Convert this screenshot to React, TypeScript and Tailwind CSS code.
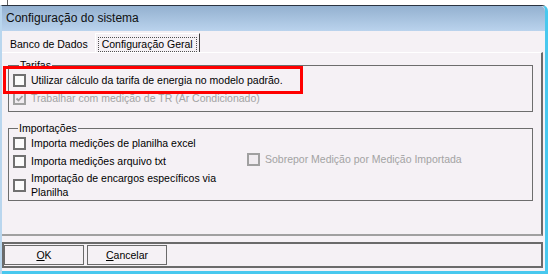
const Box = ({ checked, disabled }: { checked?: boolean; disabled?: boolean }) => (
  <span
    className={`relative inline-block w-[13px] h-[13px] shrink-0 border-2 ${
      disabled ? "border-[#a0a0a0] bg-[#f0ecf0]" : "border-[#707070] bg-[#fbfbfb]"
    }`}
  >
    {checked && (
      <svg viewBox="0 0 9 9" className="absolute left-0 top-0 w-[9px] h-[9px]">
        <path d="M1.5 4.5 L3.5 6.5 L7.5 2" stroke="#a0a0a0" strokeWidth="1.8" fill="none" />
      </svg>
    )}
  </span>
);

const Check = ({
  label,
  checked,
  disabled,
}: {
  label: React.ReactNode;
  checked?: boolean;
  disabled?: boolean;
}) => (
  <div className="flex items-center gap-[5px] h-[18px]">
    <Box checked={checked} disabled={disabled} />
    <span className={disabled ? "text-[#a3a3a3]" : "text-black"}>{label}</span>
  </div>
);

export default function App() {
  return (
    <div
      className="w-[548px] h-[276px] bg-white overflow-hidden text-[10.5px] leading-[13px] relative"
      style={{ fontFamily: '"Liberation Sans", Arial, sans-serif' }}
    >
      {/* window behind */}
      <div className="h-[5px] ml-[7px] border-l border-[#606060] bg-white" />
      <div className="w-[548px] h-[269px] border-t border-[#2b3440] border-r-[3px] border-r-[#48c8ee] border-l-2 border-l-[#b9d6ee] rounded-tr-[6px] bg-[#f5f1f5] flex flex-col">
        {/* title bar */}
        <div className="h-[25px] bg-gradient-to-b from-[#94b1d0] to-[#bad3ed] flex items-center pl-[4px] rounded-tr-[5px]">
          <span className="text-[12px] text-[#101010]">Configuração do sistema</span>
        </div>
        {/* tabs */}
        <div className="h-[21px] flex items-end pl-[6px]">
          <div className="h-[14px] px-[2px] flex items-start">Banco de Dados</div>
          <div className="ml-[5px] h-[19px] px-[2px] pt-[2px] border-l border-white border-r border-r-[#404040] border-t border-t-white flex items-center">
            <span className="border border-dotted border-[#505050] px-[3px] leading-[13px]">Configuração Geral</span>
          </div>
        </div>
        {/* panel */}
        <div className="h-[184px] w-[541px] border-t border-white border-r-2 border-r-[#6a6a6a] border-b-2 border-b-[#a0a0a0] pl-[6px] pr-[8px] pt-[7px]">
          <fieldset className="border border-[#6d6d6d] px-[4px] pb-[4px]">
            <legend className="ml-[6px] px-[1px] leading-[11px]">Tarifas</legend>
            <Check label="Utilizar cálculo da tarifa de energia no modelo padrão." />
            <Check label="Trabalhar com medição de TR (Ar Condicionado)" checked disabled />
          </fieldset>
          <fieldset className="mt-[11px] border border-[#6d6d6d] px-[4px] pb-0">
            <legend className="ml-[5px] px-[1px] leading-[11px]">Importações</legend>
            <div className="flex">
              <div className="w-[234px] flex flex-col">
                <Check label="Importa medições de planilha excel" />
                <Check label="Importa medições arquivo txt" />
                <div className="flex items-center gap-[5px] h-[30px]">
                  <Box />
                  <span className="leading-[14px]">
                    Importação de encargos específicos via
                    <br />
                    Planilha
                  </span>
                </div>
              </div>
              <div className="pt-[16px]">
                <Check label="Sobrepor Medição por Medição Importada" disabled />
              </div>
            </div>
          </fieldset>
        </div>
        {/* buttons */}
        <div className="mt-[6px] w-[541px] h-[26px] border-2 border-[#6a6a6a] flex items-center gap-[3px] pl-0">
          <button className="w-[80px] h-[20px] border border-[#6a6a6a] text-center">
            <span className="underline">O</span>K
          </button>
          <button className="w-[80px] h-[20px] border border-[#6a6a6a] text-center">
            <span className="underline">C</span>ancelar
          </button>
        </div>
        <div className="flex-1" />
        <div className="h-[3px] bg-[#48c8ee]" />
      </div>
      {/* red annotation */}
      <div className="absolute left-[3px] top-[66px] w-[300px] h-[28px] border-[3px] border-[#ff0000]" />
    </div>
  );
}
